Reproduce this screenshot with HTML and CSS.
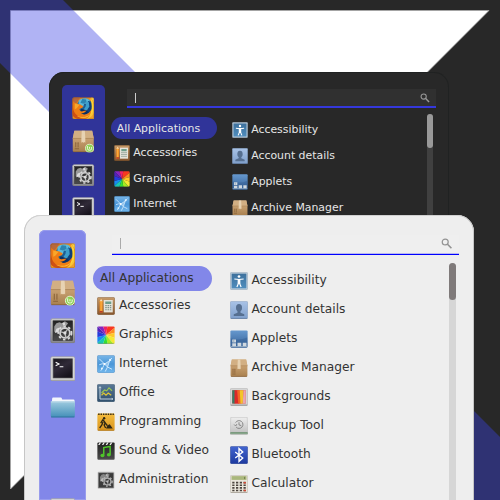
FILE: index.html
```html
<!DOCTYPE html>
<html lang="en">
<head>
<meta charset="utf-8">
<title>Application menu themes</title>
<link rel="stylesheet" href="styles.css">
</head>
<body>
<svg class="defs" width="0" height="0" aria-hidden="true">
  <defs>
    <linearGradient id="g-wood" x2="0" y2="1"><stop stop-color="#d2ae80"/><stop offset=".45" stop-color="#c49c6c"/><stop offset="1" stop-color="#a8804f"/></linearGradient>
    <linearGradient id="g-brown" x2="0" y2="1"><stop stop-color="#c69a68"/><stop offset="1" stop-color="#85562e"/></linearGradient>
    <linearGradient id="g-orange" x2="1" y2="1"><stop stop-color="#c66a2c"/><stop offset=".4" stop-color="#ef8c1c"/><stop offset="1" stop-color="#ffd83c"/></linearGradient>
    <linearGradient id="g-metal" x2="0" y2="1"><stop stop-color="#d9d9d9"/><stop offset="1" stop-color="#85858a"/></linearGradient>
    <linearGradient id="g-black" x2="0" y2="1"><stop stop-color="#222"/><stop offset="1" stop-color="#4a4a4a"/></linearGradient>
    <linearGradient id="g-term" x2=".6" y2="1"><stop stop-color="#18151d"/><stop offset=".5" stop-color="#302a38"/><stop offset="1" stop-color="#17131c"/></linearGradient>
    <linearGradient id="g-folder" x2="0" y2="1"><stop stop-color="#9fcbe0"/><stop offset="1" stop-color="#438fb8"/></linearGradient>
    <linearGradient id="g-sky" x2="0" y2="1"><stop stop-color="#78b6e8"/><stop offset=".5" stop-color="#4a96d8"/><stop offset="1" stop-color="#71b7ed"/></linearGradient>
    <linearGradient id="g-steel" x2="0" y2="1"><stop stop-color="#587795"/><stop offset="1" stop-color="#30506e"/></linearGradient>
    <linearGradient id="g-amber" x2="0" y2="1"><stop stop-color="#f5bd3e"/><stop offset="1" stop-color="#d99420"/></linearGradient>
    <linearGradient id="g-access" x2="0" y2="1"><stop stop-color="#3e719d"/><stop offset="1" stop-color="#4f8dbd"/></linearGradient>
    <linearGradient id="g-user" x2="0" y2="1"><stop stop-color="#a8c2e6"/><stop offset="1" stop-color="#7f9fcb"/></linearGradient>
    <linearGradient id="g-applet" x2="0" y2="1"><stop stop-color="#6699cf"/><stop offset="1" stop-color="#345e94"/></linearGradient>
    <linearGradient id="g-pale" x2="0" y2="1"><stop stop-color="#eee"/><stop offset="1" stop-color="#bcbcbc"/></linearGradient>
    <linearGradient id="g-blue" x2="0" y2="1"><stop stop-color="#4265d0"/><stop offset="1" stop-color="#1d3a9f"/></linearGradient>
    <clipPath id="c-tile"><rect x=".5" y=".5" width="23" height="23" rx="1.6"/></clipPath>

    <symbol id="firefox" viewBox="0 0 24 24">
      <g clip-path="url(#c-tile)">
        <rect width="24" height="24" fill="url(#g-orange)"/>
        <path d="M0 0h9L5 6 0 9z" fill="#b8683a"/>
        <circle cx="13.600" cy="10" r="8.300" fill="#1d5d92"/>
        <path d="M7 4C9 1 16 0 19 3.500l-2 4-4-.5-1 3.500-5-1z" fill="#5bb9d9"/>
        <path d="M11 2l4 .6.500 3-3.500 1.500-3-1z" fill="#2b84b0"/>
        <path d="M17 4l4 3 1 5-4 6-6 .5 5-5z" fill="#103f78"/>
        <path d="M15.500 4.500l2.500 1 .5 5-3 4-4 .5 3-5z" fill="#3c9ecb"/>
        <path d="M10 12.500l6 2 2 2.500-5 2.500-5-3z" fill="#0c3064"/>
        <path d="M1 4c1 2 2 2 3 3l5 1c1 1 2 1 3 2l-1 1.500-3 1.200c0 2 2 3.300 4 2.300l3.500-.5c-2 2.500-3.500 3-6 3 4 3 9.500 0 11.500-5 .5 7-4 11.500-10.500 11.500C4 24 0 20 0 14z" fill="#ef7d14"/>
        <path d="M1 6c-1 8 2 15 11 16.500C4 25 0 21 0 16z" fill="#cf5012"/>
        <path d="M3 7l5 1.200-3 3.800-2 1z" fill="#f9a72a"/>
        <path d="M19.500 1c5 5 5.500 14-1.500 20.500 3.500-6 4-13 1.500-20.500z" fill="#ffd536"/>
        <path d="M20 .5H24V7z" fill="#f7cf4a"/>
        <path d="M5 20c5 2.500 11 1.500 15-2-2 4-10 6-15 2z" fill="#fbc23a"/>
        <path d="M16 24q5-2 8-8v8z" fill="#f0a029"/>
      </g>
      <rect x=".8" y=".8" width="22.400" height="22.400" rx="1.500" fill="none" stroke="#63401f" stroke-opacity=".45" stroke-width=".6"/>
    </symbol>

    <symbol id="box" viewBox="0 0 24 24">
      <path d="M2.500.7h19l1.700 7.800v13.500q0 1.500-1.500 1.500H2.300q-1.500 0-1.500-1.500V8.500z" fill="url(#g-wood)"/>
      <path d="M2.500.7h19l1.700 8.300H.8z" fill="#d2af83"/>
      <path d="M.8 9h22.400" stroke="#a67e50" stroke-width=".7"/>
      <path d="M10.400.7h3.300l.5 8.300v4.500l-1-.6-1 .8-1-.8-1.200.6V9z" fill="#e7d2b2"/>
      <path d="M4 14v4.500M6.500 14v4.500M3 20h4.500M4 13v1.500M6.500 13v1.500" stroke="#8a6238" stroke-width="1"/>
      <path d="M1.200 23.300h21.600" stroke="#7c5932" stroke-width=".7"/>
    </symbol>
    <symbol id="package" viewBox="0 0 24 24">
      <use href="#box"/>
      <circle cx="18.700" cy="19.500" r="4.300" fill="#8fd153" stroke="#e5f6d4" stroke-width=".9"/>
      <path d="M16.600 17.200v2.800q0 1.500 1.500 1.500h1.200q1.500 0 1.500-1.500v-1.700M18.700 18v2" fill="none" stroke="#fff" stroke-width=".85"/>
    </symbol>

    <symbol id="gearshape" viewBox="0 0 24 24">
      <path d="M4 8l2-3 3-1 2 1 3-2 3 2-3 4-4 1-2 4-4-1z" fill="#999"/>
      <path d="M4.500 14l1.500-4 3-1-1 4z" fill="#ddd"/>
      <path d="M11.500 5l2-1 1 2-2 1z" fill="#ddd"/>
      <circle cx="14" cy="14" r="4.600" fill="none" stroke="#d0d0d0" stroke-width="1.700"/>
      <circle cx="14" cy="14" r="6.200" fill="none" stroke="#d8d8d8" stroke-width="1.700" stroke-dasharray="2.300 2.300"/>
      <path d="M14 14l-4-1M14 14l3-4M14 14l1 5" stroke="#bbb" stroke-width="1.300"/>
      <circle cx="14" cy="14" r="1.500" fill="#ddd"/>
    </symbol>
    <symbol id="settings" viewBox="0 0 24 24">
      <rect x=".5" y=".5" width="23" height="23" rx="1.800" fill="url(#g-metal)"/>
      <rect x=".8" y=".8" width="22.400" height="22.400" rx="1.500" fill="none" stroke="#777" stroke-width=".5"/>
      <rect x="2.800" y="2.600" width="18.400" height="18.400" fill="url(#g-black)" stroke="#343434" stroke-width=".6"/>
      <use href="#gearshape" width="24" height="24"/>
    </symbol>
    <symbol id="admin" viewBox="0 0 24 24">
      <rect x=".5" y=".5" width="23" height="23" rx="2" fill="#d2d2d2"/>
      <rect x="2" y="2.500" width="20" height="20" fill="#3b3b3b" stroke="#777" stroke-width=".8"/>
      <g opacity=".8"><use href="#gearshape" width="24" height="24"/></g>
    </symbol>

    <symbol id="terminal" viewBox="0 0 24 24">
      <rect x=".6" y=".5" width="22.800" height="23" rx="1.600" fill="#d5d5d5" stroke="#90909c" stroke-width=".5"/>
      <path d="M1 22.800h22" stroke="#999" stroke-width=".9"/>
      <rect x="2.900" y="2.600" width="18.200" height="18" fill="url(#g-term)" stroke="#555" stroke-width=".6"/>
      <path d="M5.300 5.800l3.200 1.700-3.200 1.700M9 10h3.500" fill="none" stroke="#fff" stroke-width="1"/>
    </symbol>

    <symbol id="folder" viewBox="0 0 24 24">
      <path d="M2 5.500q0-1.200 1-1.200h7q1 0 1.200 1L11.500 6H22q1 0 1 1v6H1.500z" fill="#f4f7fc"/>
      <path d="M.7 7.800h22.600v13.500q0 1.500-1.300 1.500H2q-1.300 0-1.300-1.500z" fill="url(#g-folder)"/>
      <path d="M1 8.400h22" stroke="#d0e6ef" stroke-width=".6"/>
      <path d="M1 22.500h22" stroke="#2a6e96" stroke-width=".8"/>
    </symbol>

    <symbol id="accessories" viewBox="0 0 24 24">
      <rect x=".5" y=".5" width="23" height="23" rx="1.800" fill="url(#g-brown)" stroke="#80562e" stroke-width=".7"/>
      <path d="M3.500 5.500l2-3 2 3v15h-4z" fill="#f28d1d"/><path d="M3.500 5.500l2-3 2 3z" fill="#f5dfb9"/><path d="M5.500 5.500v13" stroke="#ffc45e"/><path d="M3.500 18.500h4v2h-4z" fill="#b73c2c"/>
      <rect x="9" y="4" width="12" height="16.500" fill="#e5e3da"/>
      <path d="M11 6h8v3.200h-8z" fill="#6d9e89"/>
      <path d="M11 11.500h8M11 14.200h8M11 17h8" stroke="#7f9389" stroke-width="1.500" stroke-dasharray="2 1"/>
    </symbol>

    <symbol id="graphics" viewBox="0 0 24 24">
      <g clip-path="url(#c-tile)">
        <path d="M12 12L0 0H8z" fill="#8723be"/><path d="M12 12L8 0h6z" fill="#ed2268"/>
        <path d="M12 12L14 0h10v2z" fill="#f83820"/><path d="M12 12L24 2v7z" fill="#ff8c1f"/>
        <path d="M12 12L24 9v7z" fill="#ffc928"/><path d="M12 12l12 4v8h-2z" fill="#f5e932"/>
        <path d="M12 12l10 12h-8z" fill="#a4ec23"/><path d="M12 12l2 12H8z" fill="#36df34"/>
        <path d="M12 12L8 24H0v-1z" fill="#19c7b3"/><path d="M12 12L0 23v-8z" fill="#168cf0"/>
        <path d="M12 12L0 15V7z" fill="#263bdc"/><path d="M12 12L0 7V0z" fill="#5122b8"/>
      </g>
      <path d="M1 23.200h22" stroke="#444" stroke-opacity=".4"/>
    </symbol>

    <symbol id="internet" viewBox="0 0 24 24">
      <rect x=".5" y=".5" width="23" height="23" rx="1.800" fill="url(#g-sky)" stroke="#3d80be" stroke-width=".6"/>
      <path d="M3 5l7 7q6-3 10-8M10 12q-2 5-5 9M10 12l4 4 6 3M14 16l3-9M3 13q4-2 7-1M14 16l-3 6" stroke="#d3ebff" stroke-width="1.200" fill="none"/>
      <path d="M10 12l7-5-3 9z" fill="#c4e3fb" opacity=".55"/>
      <circle cx="10" cy="12" r="1.400" fill="#fff"/><circle cx="17.500" cy="6.500" r="1.500" fill="#e4f4ff"/><circle cx="6.500" cy="18" r="1.300" fill="#e4f4ff"/>
    </symbol>

    <symbol id="office" viewBox="0 0 24 24">
      <rect x=".5" y=".5" width="23" height="23" rx="1.500" fill="url(#g-steel)" stroke="#2f4b66" stroke-width=".7"/>
      <path d="M4 4v16h17M2.500 5.500L4 3.500l1.500 2M19.500 18.500l1.500 1.500-1.500 1.500" fill="none" stroke="#c6d6e0" stroke-width="1.300"/>
      <path d="M6 12l4-4 3 1 3-4 4 4" fill="none" stroke="#9bc652" stroke-width="1.500"/>
      <path d="M6 15l3-3 3 3 3-3 4 3" fill="none" stroke="#dec535" stroke-width="1.600"/>
    </symbol>

    <symbol id="programming" viewBox="0 0 24 24">
      <rect x=".5" y=".5" width="23" height="23" rx="1.500" fill="url(#g-amber)"/>
      <path d="M1.500 1.700h21" stroke="#372a15" stroke-width="2" stroke-dasharray="2 1.200"/>
      <circle cx="9.500" cy="7" r="1.600" fill="#2e2614"/>
      <path d="M8 8.500l-3 5M8 9l3 4-1.500 3 2 4M8 12l-1.500 4-3 4M9 11l5 6" fill="none" stroke="#2e2614" stroke-width="1.700"/>
      <path d="M12 20.500q2-5 5-5.500 2 3 4 5.500z" fill="#2e2614"/>
      <path d="M1 23h22" stroke="#9d6a15" stroke-width=".8"/>
    </symbol>

    <symbol id="sound" viewBox="0 0 24 24">
      <rect x=".5" y=".5" width="23" height="23" rx="1.500" fill="url(#g-black)"/>
      <path d="M1 23.200h22" stroke="#777"/>
      <path d="M1.500 4l2-3.500h2L3.500 4zM6.500 4l2-3.500h2L8.500 4zM11.500 4l2-3.500h2l-2 3.500zM16.500 4l2-3.500h2l-2 3.500z" fill="#eee"/>
      <path d="M9 17V7.500L17.500 6v10.500" fill="none" stroke="#4fc42a" stroke-width="2"/>
      <ellipse cx="7.300" cy="18" rx="2.700" ry="2.200" fill="#4fc42a"/><ellipse cx="15.800" cy="17" rx="2.700" ry="2.200" fill="#4fc42a"/>
    </symbol>

    <symbol id="accessibility" viewBox="0 0 24 24">
      <rect x=".5" y=".5" width="23" height="23" rx="1.500" fill="#bfcedb" stroke="#8198ac" stroke-width=".6"/>
      <rect x="2.200" y="2.200" width="19.600" height="19.600" fill="url(#g-access)"/>
      <circle cx="12" cy="6" r="1.800" fill="#fff"/>
      <path d="M5.800 9.300l6.200.7 6.200-.7M11.500 10v4.500l-2.300 5.500M12.500 14.500l2.300 5.500" fill="none" stroke="#fff" stroke-width="1.600"/>
      <path d="M10.200 9.500h3.600v6h-3.600z" fill="#fff"/>
    </symbol>

    <symbol id="account" viewBox="0 0 24 24">
      <rect x=".5" y=".5" width="23" height="23" rx="1.500" fill="url(#g-user)" stroke="#809abc" stroke-width=".7"/>
      <ellipse cx="12" cy="9" rx="4" ry="5" fill="#566f90"/>
      <path d="M10 12h4v3.500l5 2V20H5v-2.500l5-2z" fill="#566f90"/>
      <path d="M1 23.300h22" stroke="#536e94" stroke-width=".7"/>
    </symbol>

    <symbol id="applets" viewBox="0 0 24 24">
      <rect x=".5" y=".5" width="23" height="23" rx="1.500" fill="url(#g-applet)"/>
      <path d="M1 11q11 4 22-1v8H1z" fill="#2d5589" opacity=".35"/>
      <path d="M1 22h22" stroke="#9fb5cb" stroke-width="1"/>
      <path d="M3 12.500h5v4H3zM3 17.500h5v4H3zM10 17h5v4.500h-5zM17 17h5v4.500h-5z" fill="#d0d8df"/>
      <path d="M5 13v3" stroke="#87a0b7"/>
    </symbol>

    <symbol id="backgrounds" viewBox="0 0 24 24">
      <rect x=".5" y=".5" width="23" height="23" rx="1.500" fill="#d5d5d5" stroke="#aaa" stroke-width=".7"/>
      <path d="M3 3h18v17.500H3z" fill="#e44131"/>
      <path d="M3 3h4v17.500H3z" fill="#35806a"/><path d="M6 3h5l1 17.500H6z" fill="#db292a"/>
      <path d="M9.500 3H14l1 17.500h-4z" fill="#f26725"/><path d="M13 3h5l-1 17.500h-3z" fill="#f3c52a"/><path d="M18 3h3v17.500h-4z" fill="#e7a8b2"/>
      <path d="M1 22.800h22" stroke="#858585"/>
    </symbol>

    <symbol id="backup" viewBox="0 0 24 24">
      <path d="M1 .5h22l.7 19v2.500q0 1.500-1.500 1.500H1.800q-1.500 0-1.500-1.500v-2.500z" fill="url(#g-pale)" stroke="#aaa" stroke-width=".5"/>
      <path d="M.5 20.500h23v1.800H.5z" fill="#35723d"/><path d="M.5 22.500h23" stroke="#bcc9bd"/>
      <path d="M7.500 7.500a5.200 5.200 0 1 1 .7 6M5.500 10l2 2 1.700-2.500M12 7v3.500l3 1" fill="none" stroke="#858585" stroke-width="1.300"/>
    </symbol>

    <symbol id="bluetooth" viewBox="0 0 24 24">
      <rect x=".5" y=".5" width="23" height="23" rx="1.600" fill="url(#g-blue)" stroke="#1c3588" stroke-width=".6"/>
      <path d="M7 8l10 8-5 4.500v-17L17 8 7 16" fill="none" stroke="#fff" stroke-width="1.800"/>
    </symbol>

    <symbol id="calculator" viewBox="0 0 24 24">
      <rect x=".5" y=".5" width="23" height="23" rx="1.500" fill="#eae6dc" stroke="#b5aea2" stroke-width=".7"/>
      <rect x="2" y="1.500" width="20" height="5" fill="#a9b77c"/><path d="M19.500 2.500v3" stroke="#5d683b"/>
      <path d="M3 10.200h18M3 13.700h18M3 17.200h18M3 20.700h18" stroke="#4b443e" stroke-width="2.100" stroke-dasharray="3 2"/>
      <path d="M18.200 9.200h3v2h-3zM18.200 19.700h3v2h-3z" fill="#d54631"/>
      <path d="M1 23.300h22" stroke="#8f887e" stroke-width=".7"/>
    </symbol>

    <symbol id="search" viewBox="0 0 12 12">
      <circle cx="4.400" cy="4.200" r="3.100" fill="none" stroke="currentColor" stroke-width="1.300"/>
      <path d="M6.800 6.500l4.100 4.200" stroke="currentColor" stroke-width="1.700"/>
    </symbol>
  </defs>
</svg>

<main class="desktop">
  <svg class="wallpaper" viewBox="0 0 500 500" aria-hidden="true">
    <rect width="500" height="500" fill="#282828"/>
    <path d="M10.500 10.500H489L10.500 489z" fill="#fff" stroke="#aaa" stroke-width=".7"/>
    <path d="M0 0H63L500 437V500H437L0 63z" fill="#3941e4" fill-opacity=".4"/>
  </svg>

  <section class="menu menu-dark">
    <nav class="favorites">
      <svg><use href="#firefox"/></svg>
      <svg><use href="#package"/></svg>
      <svg><use href="#settings"/></svg>
      <svg><use href="#terminal"/></svg>
    </nav>
    <div class="content">
      <div class="search"><span class="caret"></span><svg><use href="#search"/></svg></div>
      <div class="columns">
        <ul class="categories">
          <li class="selected">All Applications</li>
          <li><svg><use href="#accessories"/></svg><span>Accessories</span></li>
          <li><svg><use href="#graphics"/></svg><span>Graphics</span></li>
          <li><svg><use href="#internet"/></svg><span>Internet</span></li>
        </ul>
        <ul class="apps">
          <li><svg><use href="#accessibility"/></svg><span>Accessibility</span></li>
          <li><svg><use href="#account"/></svg><span>Account details</span></li>
          <li><svg><use href="#applets"/></svg><span>Applets</span></li>
          <li><svg><use href="#box"/></svg><span>Archive Manager</span></li>
        </ul>
        <div class="scrollbar"><div class="thumb"></div></div>
      </div>
    </div>
  </section>

  <section class="menu menu-light">
    <nav class="favorites">
      <svg><use href="#firefox"/></svg>
      <svg><use href="#package"/></svg>
      <svg><use href="#settings"/></svg>
      <svg><use href="#terminal"/></svg>
      <svg><use href="#folder"/></svg>
      <svg class="session"><use href="#terminal"/></svg>
    </nav>
    <div class="content">
      <div class="search"><span class="caret"></span><svg><use href="#search"/></svg></div>
      <div class="columns">
        <ul class="categories">
          <li class="selected">All Applications</li>
          <li><svg><use href="#accessories"/></svg><span>Accessories</span></li>
          <li><svg><use href="#graphics"/></svg><span>Graphics</span></li>
          <li><svg><use href="#internet"/></svg><span>Internet</span></li>
          <li><svg><use href="#office"/></svg><span>Office</span></li>
          <li><svg><use href="#programming"/></svg><span>Programming</span></li>
          <li><svg><use href="#sound"/></svg><span>Sound &amp; Video</span></li>
          <li><svg><use href="#admin"/></svg><span>Administration</span></li>
        </ul>
        <ul class="apps">
          <li><svg><use href="#accessibility"/></svg><span>Accessibility</span></li>
          <li><svg><use href="#account"/></svg><span>Account details</span></li>
          <li><svg><use href="#applets"/></svg><span>Applets</span></li>
          <li><svg><use href="#box"/></svg><span>Archive Manager</span></li>
          <li><svg><use href="#backgrounds"/></svg><span>Backgrounds</span></li>
          <li><svg><use href="#backup"/></svg><span>Backup Tool</span></li>
          <li><svg><use href="#bluetooth"/></svg><span>Bluetooth</span></li>
          <li><svg><use href="#calculator"/></svg><span>Calculator</span></li>
        </ul>
        <div class="scrollbar"><div class="thumb"></div></div>
      </div>
    </div>
  </section>
</main>
</body>
</html>
```
FILE: styles.css
```css
* {
  box-sizing: border-box;
}

body {
  margin: 0;
  background: #282828;
  font-family: "DejaVu Sans", sans-serif;
}

ul {
  list-style: none;
  margin: 0;
  padding: 0;
}

svg {
  display: block;
  flex: none;
}

.defs {
  position: absolute;
}

.desktop {
  position: relative;
  width: 500px;
  height: 500px;
  overflow: hidden;
}

.wallpaper {
  width: 500px;
  height: 500px;
}

.menu {
  position: absolute;
  bottom: 0;
  display: flex;
  overflow: hidden;
}

.menu-dark {
  --row: 25.8px;
  --fav: 22.5px;
  --icon: 16px;
  left: 49px;
  top: 72px;
  width: 400px;
  padding: 13px 0 0 13px;
  border-radius: 15px 15px 0 0;
  background: #282828;
  box-shadow: inset 0 0 0 1px #202222;
  color: #e6e6e6;
  font-size: 10.9px;
}

.menu-light {
  --row: 29.05px;
  --fav: 25.6px;
  --icon: 18px;
  left: 24px;
  top: 215px;
  width: 450px;
  padding: 14.5px 0 0 14.7px;
  border-radius: 17px 17px 0 0;
  background: #eee;
  box-shadow: inset 0 1px 0 0 #d0d0d0, inset 1px 0 0 0 #c6c6c6, inset -1px 0 0 0 #c6c6c6;
  color: #333;
  font-size: 12.22px;
}

.favorites {
  display: flex;
  flex-direction: column;
  align-items: center;
  flex: none;
}

.favorites svg {
  width: var(--fav);
  height: var(--fav);
}

.menu-dark .favorites {
  width: 43px;
  padding-top: 11.5px;
  gap: 11px;
  border-radius: 5px 5px 0 0;
  background: #303499;
}

.menu-light .favorites {
  width: 47.8px;
  padding-top: 13.2px;
  gap: 12.1px;
  border-radius: 6px 6px 0 0;
  background: #8287e9;
  box-shadow: inset 0 0 0 1px #989cec;
}

.favorites .session {
  margin-top: 67px;
}

.content {
  flex: 1;
  display: flex;
  flex-direction: column;
}

.search {
  display: flex;
  align-items: center;
  justify-content: space-between;
  flex: none;
}

.menu-dark .search {
  width: 309px;
  height: 19px;
  margin: 4px 0 0 22px;
  padding: 0 6.5px 0 8px;
  border-bottom: 2px solid #3538dc;
  background: #303030;
  color: #999;
}

.menu-light .search {
  width: 347.3px;
  height: 20px;
  margin: 5.5px 0 0 25.5px;
  padding: 0 7px 2px 8.5px;
  border-bottom: 1px solid #00f;
  background: #efefef;
  box-shadow: inset 0 -1px 0 #b9b9f0;
  color: #939393;
}

.search svg {
  width: 10px;
  height: 10px;
}

.menu-light .search svg {
  width: 11.5px;
  height: 11.5px;
}

.caret {
  width: 1px;
  height: 10px;
  background: #ccc;
}

.menu-light .caret {
  height: 11px;
  background: #aaa;
}

.columns {
  display: flex;
  flex: 1;
  align-items: flex-start;
}

.columns li {
  display: flex;
  align-items: center;
  height: var(--row);
  white-space: nowrap;
}

.columns li svg {
  width: var(--icon);
  height: var(--icon);
}

.columns span {
  padding-bottom: 2px;
}

.menu-dark .columns span {
  padding-bottom: 1px;
}

.menu-dark .categories {
  width: 121.5px;
  padding: 9.2px 0 0 5.5px;
}

.menu-dark .categories li {
  padding-left: 3.3px;
  gap: 3.5px;
}

.menu-dark .categories .selected {
  width: 106px;
  height: 22.2px;
  margin-bottom: .6px;
  padding: 0 0 0 6.2px;
  border-radius: 11px;
  background: #303499;
}

.menu-dark .apps {
  width: 200.5px;
  padding: 9.4px 0 0 5.5px;
}

.menu-dark .apps li {
  gap: 3.2px;
}

.menu-light .categories {
  width: 137.5px;
  padding: 11px 0 0 6.5px;
}

.menu-light .categories li {
  padding-left: 4px;
  gap: 4px;
}

.menu-light .categories .selected {
  width: 119px;
  height: 25px;
  margin-bottom: .2px;
  padding: 0 0 1px 7px;
  border-radius: 12.5px;
  background: #8287e9;
}

.menu-light .apps {
  width: 225.5px;
  padding: 11.4px 0 0 6.3px;
}

.menu-light .apps li {
  gap: 3.2px;
}

.scrollbar {
  align-self: stretch;
  border-radius: 4px 4px 0 0;
}

.menu-dark .scrollbar {
  width: 6px;
  margin-top: 6px;
  background: #404040;
}

.menu-light .scrollbar {
  width: 7px;
  margin-top: 8px;
  background: #d6d6d6;
}

.thumb {
  border-radius: 3.5px;
}

.menu-dark .thumb {
  height: 34px;
  background: #999;
}

.menu-light .thumb {
  height: 37px;
  background: #7f7a7a;
}
```
